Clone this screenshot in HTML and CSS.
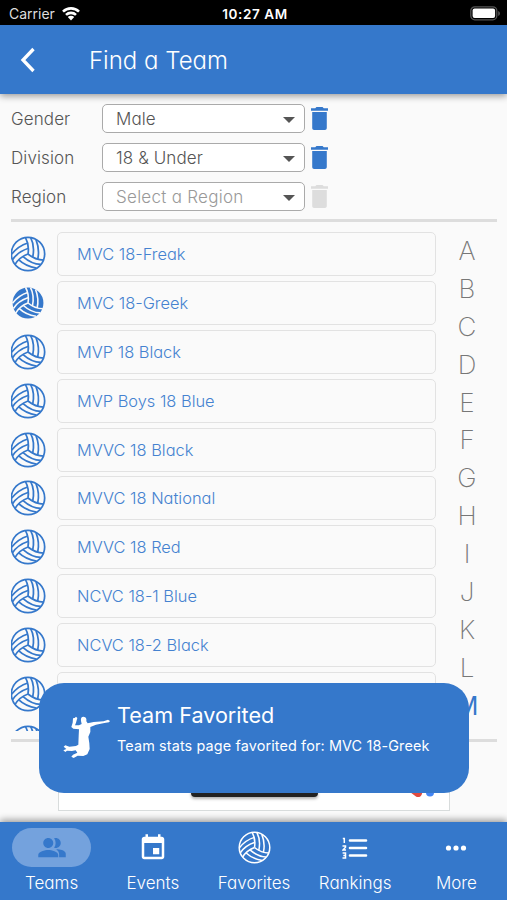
FILE: index.html
```
<!DOCTYPE html>
<html lang="en">
<head>
    <meta charset="UTF-8">
    <meta name="viewport" content="width=device-width, initial-scale=1.0">
    <title>Find a Team</title>
    <link rel="stylesheet" href="styles.css">
</head>

<body>
    <!-- shared icons -->
    <svg width="0" height="0" class="icon-defs">
        <defs>
            <g id="seams">
                <path d="M0 0C3 -18 0 -36 -8 -50M14 10C19 -14 16 -34 8 -49M29 16C34 -5 31 -25 24 -43"/>
            </g>
            <symbol id="ball" viewBox="-54 -54 108 108">
                <g fill="none" stroke="currentColor">
                    <circle r="50"/>
                    <use href="#seams"/>
                    <use href="#seams" transform="rotate(120)"/>
                    <use href="#seams" transform="rotate(240)"/>
                </g>
            </symbol>
            <symbol id="ball-filled" viewBox="-54 -54 108 108">
                <circle r="49" fill="currentColor"/>
                <g fill="none" stroke="#fafafa">
                    <use href="#seams"/>
                    <use href="#seams" transform="rotate(120)"/>
                    <use href="#seams" transform="rotate(240)"/>
                </g>
            </symbol>
            <symbol id="trash" viewBox="5 3 14 18" preserveAspectRatio="none">
                <path fill="currentColor" d="M6 19.500c0 .9.700 1.500 1.500 1.500h9c.8 0 1.500-.6 1.500-1.500V7H6v12.500zM19 4h-3.500l-1-1h-5l-1 1H5v2h14V4z"/>
            </symbol>
        </defs>
    </svg>

    <div class="status-bar">
        <span class="carrier">Carrier
            <svg width="20" height="15" viewBox="0 0 20 15">
                <path d="M2 5.6a11.5 11.5 0 0 1 16 0M5 8.9a7.2 7.2 0 0 1 10 0" fill="none" stroke="#fff" stroke-width="2.6"/>
                <path d="M10 14.4l-3.2-3.3a4.6 4.6 0 0 1 6.4 0z" fill="#fff"/>
            </svg>
        </span>
        <span class="time">10:27 AM</span>
        <svg class="battery" width="31" height="15" viewBox="0 0 31 15">
            <rect x=".8" y=".8" width="26" height="13" rx="4" fill="none" stroke="#555" stroke-width="1.3"/>
            <rect x="2.6" y="2.6" width="22.5" height="9.5" rx="2" fill="#fff"/>
            <path d="M28.3 5v5c2-.8 2-4.200 0-5z" fill="#666"/>
        </svg>
    </div>

    <header class="app-bar">
        <svg width="16" height="26" viewBox="0 0 16 26">
            <path d="M13.500 2L3 13l10.500 11" fill="none" stroke="#fff" stroke-width="3.300"/>
        </svg>
        <h1>Find a Team</h1>
    </header>

    <main>
        <div class="filters">
            <div class="filter-row">
                <label>Gender</label>
                <div class="select">Male</div>
                <svg class="trash"><use href="#trash"/></svg>
            </div>
            <div class="filter-row">
                <label>Division</label>
                <div class="select">18 &amp; Under</div>
                <svg class="trash"><use href="#trash"/></svg>
            </div>
            <div class="filter-row">
                <label>Region</label>
                <div class="select empty">Select a Region</div>
                <svg class="trash disabled"><use href="#trash"/></svg>
            </div>
        </div>

        <div class="browser">
            <div class="team-list">
                <div class="team"><svg class="ball"><use href="#ball"/></svg><div class="team-name">MVC 18-Freak</div></div>
                <div class="team"><svg class="ball favorite"><use href="#ball-filled"/></svg><div class="team-name">MVC 18-Greek</div></div>
                <div class="team"><svg class="ball"><use href="#ball"/></svg><div class="team-name">MVP 18 Black</div></div>
                <div class="team"><svg class="ball"><use href="#ball"/></svg><div class="team-name">MVP Boys 18 Blue</div></div>
                <div class="team"><svg class="ball"><use href="#ball"/></svg><div class="team-name">MVVC 18 Black</div></div>
                <div class="team"><svg class="ball"><use href="#ball"/></svg><div class="team-name">MVVC 18 National</div></div>
                <div class="team"><svg class="ball"><use href="#ball"/></svg><div class="team-name">MVVC 18 Red</div></div>
                <div class="team"><svg class="ball"><use href="#ball"/></svg><div class="team-name">NCVC 18-1 Blue</div></div>
                <div class="team"><svg class="ball"><use href="#ball"/></svg><div class="team-name">NCVC 18-2 Black</div></div>
                <div class="team"><svg class="ball"><use href="#ball"/></svg><div class="team-name"></div></div>
                <div class="team"><svg class="ball"><use href="#ball"/></svg><div class="team-name"></div></div>
            </div>
            <div class="letters">
                <span>A</span><span>B</span><span>C</span><span>D</span><span>E</span><span>F</span><span>G</span>
                <span>H</span><span>I</span><span>J</span><span>K</span><span>L</span><span class="current">M</span>
            </div>
        </div>

        <div class="ad">
            <div class="ad-button"></div>
            <svg class="ad-logo" width="30" height="24" viewBox="0 0 30 24">
                <path d="M3 14l8 6" stroke="#e04a3f" stroke-width="8" stroke-linecap="round"/>
                <path d="M23 4v15.500" stroke="#4285f4" stroke-width="8" stroke-linecap="round"/>
            </svg>
        </div>
    </main>

    <div class="toast">
        <svg width="48" height="44" viewBox="0 0 144 132">
            <path fill="#fff" d="M35 9L39 5L43 9L39 23L36 31L48 31L56 27L54 18Q52 5 62 5Q72 6 70 19L74 25L92 21L122 19L135 14L141 18L138 22L124 24L99 29L82 36L82 51L76 65L79 85L80 102L73 118L61 123L44 122L32 129L25 125L30 119L43 113L38 106L27 108L12 107L7 111L1 106L10 102L2 95L7 91L19 95L39 93L46 89L47 63L48 43L31 41L25 36L29 23L30 10Z"/>
        </svg>
        <div class="toast-text">
            <h2>Team Favorited</h2>
            <p>Team stats page favorited for: MVC 18-Greek</p>
        </div>
    </div>

    <nav class="tab-bar">
        <div class="tab active">
            <div class="tab-icon">
                <svg width="30" height="30" viewBox="0 0 24 24"><path fill="currentColor" d="M16.500 13c-.4 0-.7 0-1.100.1 1.500 1 2.300 2.200 2.300 3.900v2.300H23V16.500c0-2-3.200-3.300-6.500-3.500zM15 12c2.200 0 4-1.800 4-4s-1.800-4-4-4c-.5 0-.9.100-1.300.2 1.600 2 1.600 5.400 0 7.500.4.2.8.300 1.300.3zM9 12c2.200 0 4-1.800 4-4s-1.800-4-4-4-4 1.800-4 4 1.800 4 4 4zM9 13.500c-2.700 0-8 1.300-8 4v1.800h16v-1.800c0-2.700-5.300-4-8-4z"/></svg>
            </div>
            <span>Teams</span>
        </div>
        <div class="tab">
            <div class="tab-icon">
                <svg width="30" height="30" viewBox="0 0 24 24"><path fill="currentColor" d="M17 12h-5v5h5v-5zM16 1v2H8V1H6v2H5c-1.100 0-2 .9-2 2v14c0 1.100.9 2 2 2h14c1.100 0 2-.9 2-2V5c0-1.100-.9-2-2-2h-1V1h-2zm3 18H5V8h14v11z"/></svg>
            </div>
            <span>Events</span>
        </div>
        <div class="tab">
            <div class="tab-icon"><svg class="tab-ball"><use href="#ball"/></svg></div>
            <span>Favorites</span>
        </div>
        <div class="tab">
            <div class="tab-icon">
                <svg width="26" height="22" viewBox="0 0 26 22">
                    <path d="M8 3.500h16M8 11h16M8 18.500h16" stroke="currentColor" stroke-width="2.600" stroke-linecap="round"/>
                    <path d="M.8 1.500h1.500v4.500M.5 9h3v1.300L1 13h3M.6 16h2.900v5h-3M1.300 18.500h2" fill="none" stroke="currentColor" stroke-width="1.500"/>
                </svg>
            </div>
            <span>Rankings</span>
        </div>
        <div class="tab">
            <div class="tab-icon">
                <svg width="22" height="8" viewBox="0 0 22 8"><g fill="currentColor"><circle cx="3.500" cy="4" r="2.600"/><circle cx="11" cy="4" r="2.600"/><circle cx="18.500" cy="4" r="2.600"/></g></svg>
            </div>
            <span>More</span>
        </div>
    </nav>
</body>
</html>
```

FILE: styles.css
```
* {
    box-sizing: border-box;
}
body {
    margin: 0;
    height: 900px;
    display: flex;
    flex-direction: column;
    overflow: hidden;
    position: relative;
    background-color: #fafafa;
    color: #555;
    font-family: Inter, "Open Sans", sans-serif;
    font-weight: 300;
    font-feature-settings: "cv11";
}
.icon-defs {
    position: absolute;
}
.status-bar {
    display: grid;
    grid-template-columns: 1fr auto 1fr;
    align-items: center;
    height: 25px;
    padding: 2px 6px 0 9px;
    background-color: #000;
    color: #fff;
    font-size: 14px;
    font-weight: 400;
    font-feature-settings: normal;
}
.carrier {
    display: flex;
    align-items: center;
    gap: 6px;
    color: #ddd;
}
.time {
    font-weight: 600;
    font-size: 13.5px;
    letter-spacing: 0.6px;
}
.battery {
    justify-self: end;
}
.app-bar {
    display: flex;
    align-items: center;
    height: 69px;
    padding: 1px 20px 0;
    gap: 53px;
    background-color: #3578cb;
    color: #fff;
    box-shadow: 0 2px 7px rgba(0, 0, 0, 0.4);
    z-index: 1;
}
.app-bar h1 {
    margin: 0;
    font-size: 24px;
    font-weight: 300;
}
main {
    flex: 1;
    padding: 10px 10px 0 11px;
}
.filters {
    display: flex;
    flex-direction: column;
    gap: 10px;
    padding-bottom: 8px;
    border-bottom: 3px solid #ddd;
}
.filter-row {
    display: flex;
    align-items: center;
    height: 29px;
    font-size: 17px;
    letter-spacing: 0.1px;
}
.filter-row label {
    width: 91px;
}
.select {
    display: flex;
    align-items: center;
    justify-content: space-between;
    width: 203px;
    height: 29px;
    padding: 0 9px 0 13px;
    border: 1px solid #aaa;
    border-radius: 5px;
    background-color: #fff;
}
.select.empty {
    color: #999;
    letter-spacing: 0.27px;
}
.select::after {
    content: "";
    border: 6px solid transparent;
    border-top-color: #555;
    border-bottom: 0;
    margin-top: 2px;
}
.trash {
    width: 17px;
    height: 23px;
    margin-left: 6px;
    color: #3578cb;
}
.trash.disabled {
    color: #ddd;
}
.browser {
    display: flex;
    justify-content: space-between;
    height: 520px;
    border-bottom: 3px solid #ddd;
}
.team-list {
    width: 425px;
    height: 509px;
    padding-top: 10px;
    overflow: hidden;
}
.team {
    display: flex;
    align-items: center;
    gap: 10px;
    height: 44px;
    margin-bottom: 4.9px;
    color: #3578cb;
}
.ball {
    width: 36px;
    height: 36px;
    margin-left: -1px;
    stroke-width: 5.2;
}
.ball.favorite {
    padding: 1px;
    stroke-width: 5;
}
.team-name {
    display: flex;
    align-items: center;
    width: 379px;
    height: 44px;
    margin-left: 1px;
    padding-left: 19px;
    border: 1.5px solid #e2e2e2;
    border-radius: 5px;
    color: #4582d0;
    font-size: 16.4px;
}
.letters {
    display: flex;
    flex-direction: column;
    align-items: center;
    width: 60px;
    padding-top: 10px;
    color: #777;
    font-size: 26px;
    font-weight: 200;
}
.letters span {
    height: 37.9px;
    line-height: 38px;
}
.letters .current {
    color: #3578cb;
    font-size: 25px;
    font-weight: 400;
}
.ad {
    display: flex;
    align-items: flex-end;
    justify-content: flex-end;
    gap: 89px;
    width: 392px;
    height: 69px;
    margin-left: 47px;
    padding: 0 12px 13px 0;
    border: 1px solid #d8dcdc;
    background-color: #fff;
}
.ad-button {
    width: 127px;
    height: 40px;
    border-radius: 4px;
    background-color: #222;
    box-shadow: 0 2px 3px rgba(0, 0, 0, 0.3);
}
.toast {
    position: absolute;
    left: 39px;
    top: 683px;
    width: 430px;
    height: 110px;
    display: flex;
    gap: 6px;
    padding: 32px 0 0 24px;
    border-radius: 25px;
    background-color: #3578cb;
    color: #fff;
    font-feature-settings: normal;
}
.toast-text {
    margin-top: -14px;
}
.toast h2 {
    margin: 0;
    font-size: 21.6px;
    font-weight: 400;
    line-height: 28px;
}
.toast p {
    margin: 8px 0 0;
    font-size: 14.4px;
    font-weight: 400;
    letter-spacing: 0.13px;
    line-height: 18px;
    white-space: nowrap;
}
.tab-bar {
    display: flex;
    height: 78px;
    padding: 6px 0 0 1px;
    background-color: #3578cb;
    color: #fff;
    box-shadow: 0 -2px 7px rgba(0, 0, 0, 0.4);
    z-index: 1;
}
.tab {
    flex: 1;
    display: flex;
    flex-direction: column;
    align-items: center;
    gap: 6px;
    font-size: 17px;
}
.tab-icon {
    display: flex;
    align-items: center;
    justify-content: center;
    width: 79px;
    height: 39px;
    border-radius: 20px;
}
.active .tab-icon {
    background-color: #74a2dd;
    color: #3578cb;
}
.tab-ball {
    width: 33px;
    height: 33px;
    stroke-width: 5;
}
```
